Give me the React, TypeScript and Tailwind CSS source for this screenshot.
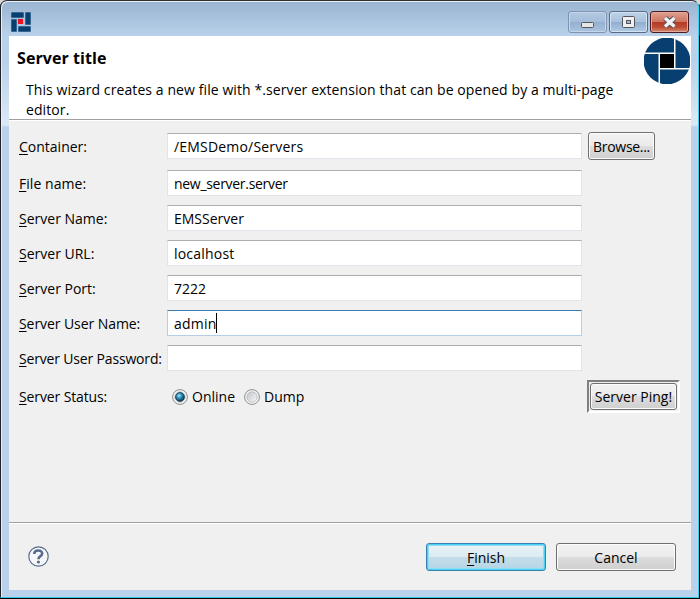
import type { ReactNode } from "react";

function Label({ mnemonic, rest, spacing }: { mnemonic: string; rest: string; spacing: string }) {
  return (
    <span className={`block w-[148px] shrink-0 whitespace-nowrap pt-px leading-[20px] ${spacing}`}>
      <span className="underline decoration-1 underline-offset-2">{mnemonic}</span>
      {rest}
    </span>
  );
}

function Field({ value, spacing, focused }: { value: string; spacing: string; focused?: boolean }) {
  const border = focused
    ? "border-[#b5cfe7] border-t-[#3d7bad]"
    : "border-[#e2e3ea] border-t-[#abadb3]";
  return (
    <div className={`flex h-[26px] w-[415px] shrink-0 items-center whitespace-nowrap rounded-[1px] border bg-white pl-[6px] ${border} ${spacing}`}>
      <span className="pt-px leading-[20px]">{value}</span>
      {focused && <span className="h-[20px] w-px bg-black" />}
    </div>
  );
}

function Row({ children, className = "" }: { children: ReactNode; className?: string }) {
  return <div className={`flex h-[26px] items-center ${className}`}>{children}</div>;
}

const glossy =
  "flex items-center justify-center rounded-[3px] border border-[#707070] bg-[linear-gradient(#f2f2f2_0%,#ebebeb_49%,#dddddd_50%,#cfcfcf_100%)] shadow-[inset_0_0_0_1px_#fbfbfb] whitespace-nowrap leading-[20px]";

function Radio({ checked }: { checked?: boolean }) {
  return (
    <svg width="16" height="16" viewBox="0 0 16 16" className="shrink-0">
      <defs>
        <radialGradient id="dot" cx="0.4" cy="0.35" r="0.65">
          <stop offset="0" stopColor="#b8f0fc" />
          <stop offset="0.35" stopColor="#38a3cc" />
          <stop offset="1" stopColor="#0b2f4e" />
        </radialGradient>
        <linearGradient id="well" x1="0" y1="0" x2="1" y2="1">
          <stop offset="0" stopColor="#bfc3c8" />
          <stop offset="1" stopColor="#f7f7f7" />
        </linearGradient>
      </defs>
      <circle cx="8" cy="8" r="7.4" fill="#f6f6f6" stroke="#8a8c8e" />
      <circle cx="8" cy="8" r="5.2" fill="url(#well)" stroke="#b7babd" strokeWidth="0.8" />
      {checked && <circle cx="8" cy="8" r="4.4" fill="url(#dot)" stroke="#143450" strokeWidth="0.8" />}
    </svg>
  );
}

export default function App() {
  return (
    <div className="h-[599px] w-[700px] overflow-hidden bg-[linear-gradient(#d8d8d8_0px,#d8d8d8_4px,#404040_5px,#404040_35px,#000_36px)] font-['Open_Sans','Noto_Sans',sans-serif] text-[14px] text-black">
      <div className="border-b border-black">
        <div className="flex h-[598px] w-[699px] flex-col rounded-t-[7px] border border-b-[#35c8e4] border-l-[#202428] border-r-[#35d3f0] border-t-[#303030] bg-[linear-gradient(#99b4d1_0px,#b9d1ea_35px,#b9d1ea_60px,#dce8f5_124px,#b9d1ea_126px)] pl-[8px] pr-[7px] shadow-[inset_1px_1px_0_#e8f1fa]">
          <header className="flex h-[35px] shrink-0 items-start">
            <svg width="20" height="20" viewBox="0 0 20 20" className="ml-[2px] mt-[11px]">
              <path d="M0 0H13V6H0ZM14 0H20V13H14ZM0 7H6V20H0ZM7 14H20V20H7Z" fill="#063f70" stroke="#a9c2de" strokeWidth="0.6" />
              <path d="M7 7H12V12H7Z" fill="#ed1020" />
            </svg>
            <div className="ml-auto mr-[2px] mt-[10px] flex gap-[2px]">
              <div className="h-[22px] w-[39px] rounded-[3px] border border-[#8193b0] bg-[linear-gradient(#b3c9e2_0%,#a4bdd9_49%,#94afcf_50%,#aac4e0_100%)] shadow-[inset_0_0_0_1px_#c4d6e9]">
                <svg width="37" height="20"><rect x="12.5" y="10.5" width="12" height="5" rx="1" fill="#e6e6e6" stroke="#53565e" /></svg>
              </div>
              <div className="h-[22px] w-[39px] rounded-[3px] border border-[#596a87] bg-[linear-gradient(#bfd3e9_0%,#a9c1dc_49%,#91adce_50%,#b0cbe6_100%)] shadow-[inset_0_0_0_1px_#d4e3f2]">
                <svg width="37" height="20">
                  <rect x="12.5" y="4.5" width="12" height="11" rx="1" fill="#efefef" stroke="#53565e" />
                  <rect x="16.5" y="8.5" width="4" height="3" fill="#a0b8d4" stroke="#53565e" />
                </svg>
              </div>
              <div className="h-[22px] w-[39px] rounded-[3px] border border-[#491c22] bg-[linear-gradient(#dea191_0%,#cf7460_48%,#b43a25_50%,#bd4b31_75%,#d38a72_100%)] shadow-[inset_0_0_0_1px_#e4a99b]">
                <svg width="37" height="20">
                  <path d="M14 6L23.5 14.5M23.5 6L14 14.5" stroke="#55555e" strokeWidth="5.5" />
                  <path d="M14 6L23.5 14.5M23.5 6L14 14.5" stroke="#f3f3f3" strokeWidth="3.4" />
                </svg>
              </div>
            </div>
          </header>
          <section className="flex h-[83px] shrink-0 justify-between bg-white">
            <div className="pl-[8px] pt-[12px]">
              <h1 className="text-[16px] font-bold leading-[20px] tracking-[0.07px]">Server title</h1>
              <p className="ml-[9px] mt-[12px] whitespace-nowrap leading-[20px] tracking-[0.09px]">
                This wizard creates a new file with *.server extension that can be opened by a multi-page<br />editor.
              </p>
            </div>
            <svg width="46" height="46" viewBox="0 0 46 46" className="mr-[1px] mt-[2px]">
              <clipPath id="disc"><circle cx="23" cy="23" r="23.4" /></clipPath>
              <g clipPath="url(#disc)" fill="#063f70"><path d="M0 0H30V14.5H0ZM31.5 0H46V30H31.5ZM0 16H14.5V46H0ZM16 31.5H46V46H16Z" /></g>
              <path d="M16 16H30V30H16Z" fill="#000" />
            </svg>
          </section>
          <main className="h-[404px] shrink-0 border-b border-t border-[#a0a0a0] bg-[#f0f0f0] pl-[10px] pt-[12px] shadow-[inset_0_1px_0_white]">
            <div className="flex h-[28px] items-center">
              <Label mnemonic="C" rest="ontainer:" spacing="" />
              <Field value="/EMSDemo/Servers" spacing="tracking-[0.19px]" />
              <button className={`ml-[6px] h-[28px] w-[67px] tracking-[-0.3px] ${glossy}`}><span className="pt-px">Browse...</span></button>
            </div>
            <Row className="mt-[10px]"><Label mnemonic="F" rest="ile name:" spacing="tracking-[0.05px]" /><Field value="new_server.server" spacing="tracking-[-0.3px]" /></Row>
            <Row className="mt-[9px]"><Label mnemonic="S" rest="erver Name:" spacing="" /><Field value="EMSServer" spacing="" /></Row>
            <Row className="mt-[9px]"><Label mnemonic="S" rest="erver URL:" spacing="" /><Field value="localhost" spacing="tracking-[0.2px]" /></Row>
            <Row className="mt-[9px]"><Label mnemonic="S" rest="erver Port:" spacing="" /><Field value="7222" spacing="" /></Row>
            <Row className="mt-[9px]"><Label mnemonic="S" rest="erver User Name:" spacing="tracking-[-0.07px]" /><Field value="admin" spacing="tracking-[0.2px]" focused /></Row>
            <Row className="mt-[9px]"><Label mnemonic="S" rest="erver User Password:" spacing="tracking-[-0.17px]" /><Field value="" spacing="" /></Row>
            <div className="mt-[9px] flex h-[33px] items-center">
              <Label mnemonic="S" rest="erver Status:" spacing="tracking-[-0.12px]" />
              <div className="flex w-[420px] items-center pl-[5px]">
                <Radio checked /><span className="ml-[4px] w-[52px] pt-px leading-[20px]">Online</span>
                <Radio /><span className="ml-[4px] pt-px leading-[20px]">Dump</span>
              </div>
              <div className="h-[33px] w-[93px] border-2 border-b-white border-l-[#808080] border-r-white border-t-[#808080] p-px">
                <button className={`h-full w-full ${glossy}`}><span className="pt-px">Server Ping!</span></button>
              </div>
            </div>
          </main>
          <footer className="flex h-[67px] shrink-0 items-center bg-[#f0f0f0] pl-[19px] pr-[15px] shadow-[inset_0_1px_0_white]">
            <svg width="21" height="21" viewBox="0 0 21 21">
              <circle cx="10.5" cy="10.5" r="9.7" fill="#f7f8fa" stroke="#566c8e" strokeWidth="1.2" />
              <path d="M6.3 8.1C6.3 3.4 14.2 3.4 14.2 7.6C14.2 10.4 10.4 9.8 10.4 13.2" fill="none" stroke="#566c8e" strokeWidth="2.6" />
              <circle cx="10.4" cy="16" r="1.6" fill="#566c8e" />
            </svg>
            <button className="ml-auto flex h-[28px] w-[120px] items-center justify-center rounded-[3px] border border-[#3c7fb1] bg-[linear-gradient(#eaf3f8_0%,#dcebf2_49%,#c5deea_50%,#b4d5e5_100%)] leading-[20px] shadow-[inset_0_0_0_1px_#48d0f5,inset_0_0_0_2px_#8fdcf3]"><span className="pt-[2px]"><u className="decoration-1 underline-offset-2">F</u>inish</span></button>
            <button className={`ml-[10px] h-[28px] w-[120px] ${glossy}`}><span className="pt-[2px]">Cancel</span></button>
          </footer>
        </div>
      </div>
    </div>
  );
}
